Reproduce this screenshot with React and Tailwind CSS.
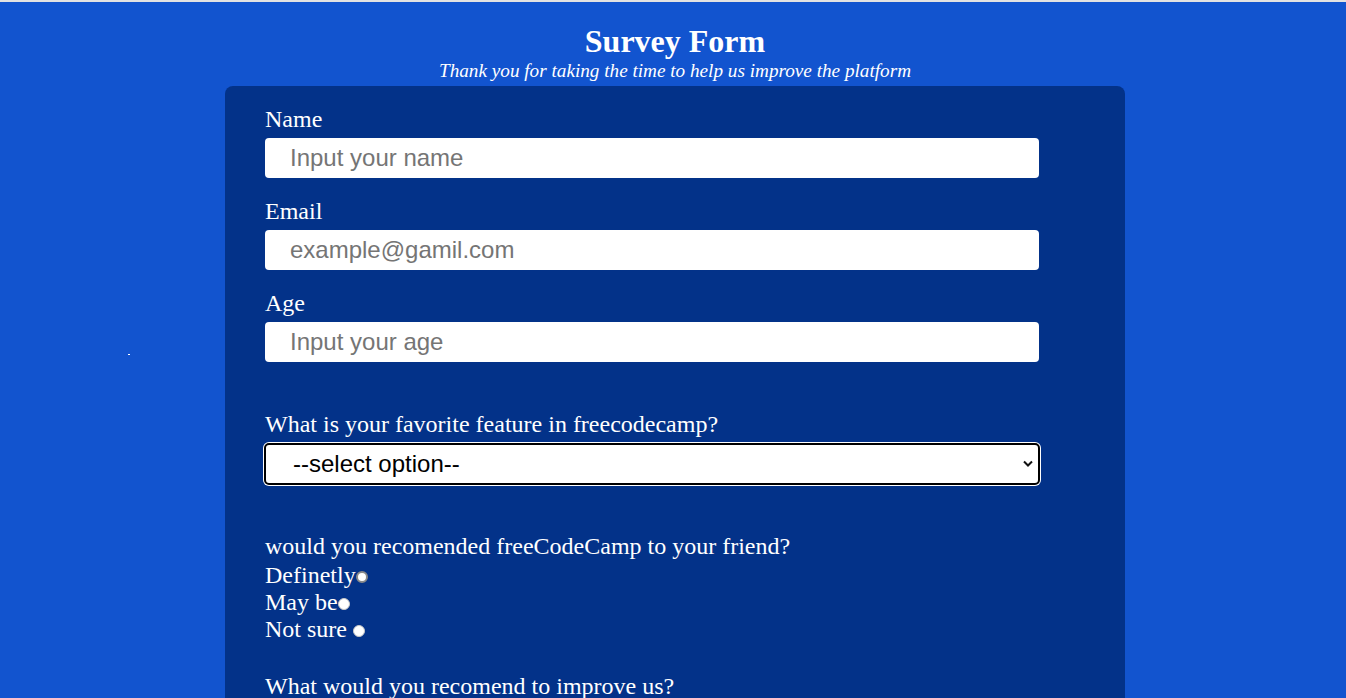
import React from 'react';

const serif = { fontFamily: '"Liberation Serif", "Times New Roman", serif' };

function Field({ label, placeholder, first }) {
  return (
    <div className={first ? '' : 'mt-[19px]'}>
      <label className="block text-[24px] leading-[28px] text-white">{label}</label>
      <input
        placeholder={placeholder}
        className="mt-[5px] block h-[40px] w-[774px] rounded-[4px] bg-white pl-[25px] text-[24px] text-black outline-none placeholder:text-[#757575] font-['Liberation_Sans',Arial,sans-serif]"
      />
    </div>
  );
}

function Radio({ label, dark }) {
  return (
    <div className="flex h-[27px] items-center text-[24px] leading-[27px] text-white">
      <span className="whitespace-pre">{label}</span>
      <span
        className={`mt-[3px] inline-block h-[12px] w-[12px] rounded-full bg-white ${
          dark ? 'border-2 border-[#8a8a8a]' : 'border border-[#c8c8c8]'
        }`}
      />
    </div>
  );
}

export default function App() {
  return (
    <div className="relative min-h-[698px] overflow-hidden bg-[#1254cf]" style={serif}>
      <div className="h-[2px] bg-[#e2e2e2]" />
      {/* stray dot */}
      <div className="absolute left-[128px] top-[354px] h-px w-[2px] bg-white" />

      <div className="ml-[225px] w-[900px]">
        <h1 className="pt-[21px] text-center text-[32px] font-bold leading-[36px] text-white">Survey Form</h1>
        <p className="pt-px text-center text-[19.2px] italic leading-[22px] text-white">
          Thank you for taking the time to help us improve the platform
        </p>

        <form className="mt-[4px] rounded-t-[8px] bg-[#033289] px-[40px] pt-[19px] pb-[20px]">
          <Field first label="Name" placeholder="Input your name" />
          <Field label="Email" placeholder="example@gamil.com" />
          <Field label="Age" placeholder="Input your age" />

          <div className="mt-[48px]">
            <label className="block text-[24px] leading-[28px] text-white">
              What is your favorite feature in freecodecamp?
            </label>
            <div className="relative mt-[5px] w-[776px] -ml-px">
              <select className="block h-[42px] w-full appearance-none rounded-[5px] border-2 border-black bg-white pl-[27px] text-[24px] text-black shadow-[0_0_0_1px_#ffffff] outline-none font-['Liberation_Sans',Arial,sans-serif]">
                <option>--select option--</option>
              </select>
              <svg className="pointer-events-none absolute right-[7px] top-[17px]" width="10" height="7" viewBox="0 0 10 7">
                <path d="M1 1.5 L5 5.5 L9 1.5" fill="none" stroke="#111" strokeWidth="2" />
              </svg>
            </div>
          </div>

          <div className="mt-[47px]">
            <p className="text-[24px] leading-[28px] text-white">would you recomended freeCodeCamp to your friend?</p>
            <div className="pt-[2px]">
              <Radio label="Definetly" dark />
              <Radio label="May be" />
              <Radio label="Not sure " />
            </div>
          </div>

          <p className="mt-[29px] text-[24px] leading-[28px] text-white">What would you recomend to improve us?</p>
          <div className="h-[200px]" />
        </form>
      </div>

      <div className="absolute bottom-0 left-0 h-px w-full bg-[#e2e2e2]" />
    </div>
  );
}
